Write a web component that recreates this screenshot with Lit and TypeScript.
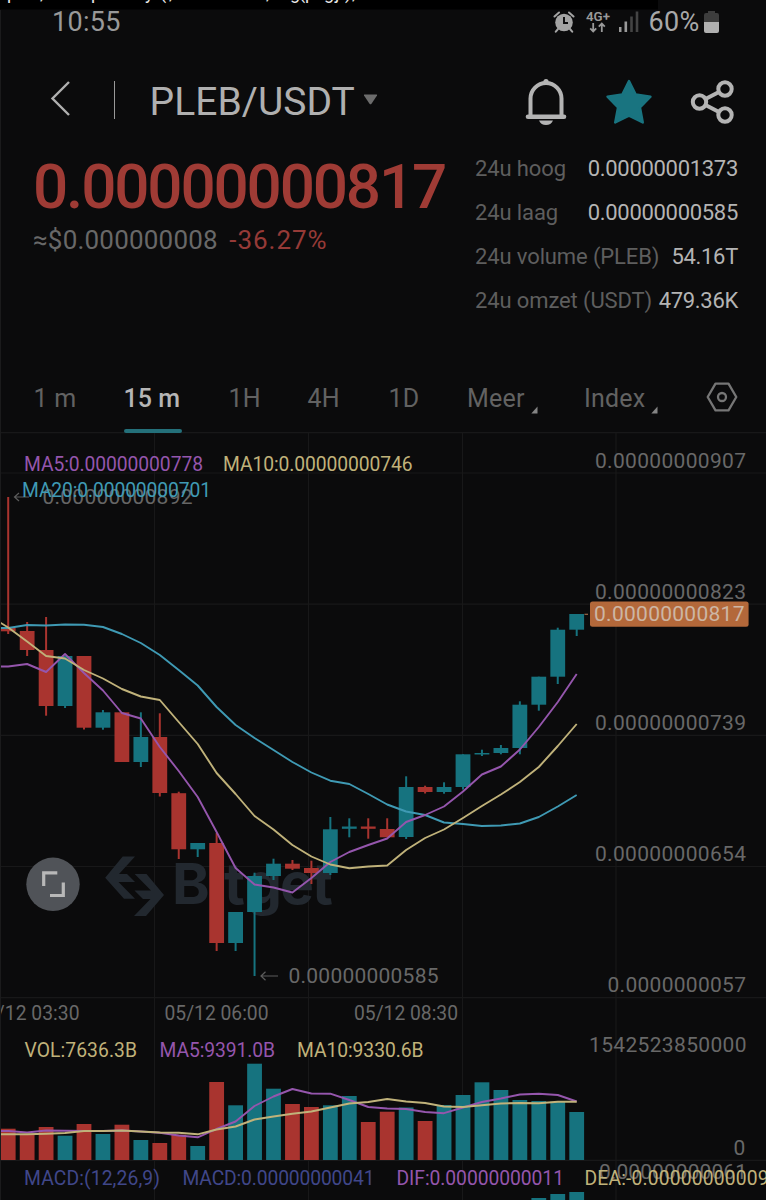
import { LitElement, html, svg, css } from "lit";
import { customElement } from "lit/decorators.js";

type Candle = [up: number, top: number, bottom: number, high: number, low: number];

const STEP = 18.95;
const FIRST_X = 8.2;
const BAR_W = 14.8;
const TEAL = "#16737f";
const RED = "#a9342f";
const PURPLE = "#9556ad";
const SAND = "#c0b27a";
const CYAN = "#3f9ab4";

const xAt = (i: number) => FIRST_X + STEP * i;

const candles: Candle[] = [
  [0, 628, 631.3, 497, 634],
  [0, 631, 650, 622, 656],
  [0, 650, 706, 617, 715.7],
  [1, 656, 706, 656, 708],
  [0, 656, 727.7, 656, 729.5],
  [1, 712.3, 727.7, 710, 729.7],
  [0, 712.3, 762, 712.3, 762],
  [1, 737, 762, 712.3, 767],
  [0, 737, 793, 713.3, 796.5],
  [0, 793.2, 849.3, 791.7, 859],
  [1, 843, 849.3, 843, 857],
  [0, 843, 943, 833, 951],
  [1, 912, 943, 912, 951],
  [1, 876, 912, 872.7, 976],
  [1, 863.7, 876, 858.7, 880],
  [0, 863.7, 868.7, 860, 870],
  [0, 868, 873, 860.7, 884],
  [1, 829.3, 873, 817, 875],
  [1, 826.5, 828.8, 818.3, 837.3],
  [0, 826.5, 828.8, 818.3, 838.7],
  [0, 829, 837.3, 818.3, 837.3],
  [1, 787, 837, 776.3, 839],
  [0, 787, 792, 785.7, 793.5],
  [1, 787, 792, 782.3, 793.7],
  [1, 754.3, 787, 754.3, 789.5],
  [1, 753, 754.5, 749.7, 756],
  [1, 748, 753, 745, 754.3],
  [1, 704.7, 748, 701.3, 754.3],
  [1, 676.7, 704.7, 676.7, 710.7],
  [1, 629.7, 676.7, 627.7, 684],
  [1, 614, 629.7, 614, 636],
];

const ma5 = [666.5, 664, 672, 654, 673, 690.5, 713, 718.5, 747, 771, 797, 832, 868, 884.5, 887.5, 892.5, 878, 862, 852, 845, 838.5, 822, 815, 806.5, 791.5, 774.5, 766.5, 749.5, 727, 702, 674];
const ma10 = [627.5, 641.5, 656, 658.5, 670, 678.5, 689, 696.5, 700, 722, 744, 773, 794, 816, 829.5, 845, 856.5, 864.5, 868.3, 866.5, 865.5, 850, 838, 829.5, 818, 806, 794.5, 782, 767, 746, 724];
const ma20 = [628, 625, 625.5, 624.5, 624.7, 627, 634, 643, 655, 670, 685.5, 707, 725, 738, 750, 762, 772.5, 780.7, 784, 794, 804.5, 811.5, 815, 822.5, 824, 826, 825.5, 823.5, 817, 806.5, 795];

const volume = [1128.7, 1134, 1127, 1135.7, 1124, 1134, 1124.7, 1140, 1143, 1134.7, 1146, 1082, 1105.3, 1063.7, 1088.7, 1104, 1107, 1105.3, 1096, 1122, 1111.7, 1107.5, 1121, 1105, 1095, 1082.3, 1090, 1100, 1101, 1101.7, 1112];
const volMa5 = [1131, 1132.5, 1130.5, 1130.7, 1131, 1131, 1130.5, 1131.5, 1132.7, 1135.5, 1137.3, 1129, 1121.5, 1106, 1096.5, 1089, 1093.5, 1093.7, 1100, 1107, 1108.5, 1109, 1112, 1113.2, 1107.5, 1102, 1098.5, 1094.5, 1093.8, 1095, 1101.5];
const volMa10 = [1134.3, 1134.3, 1133.8, 1133, 1131, 1131, 1130.5, 1131.5, 1132.5, 1132.7, 1134.3, 1129.5, 1126.5, 1119.5, 1116.5, 1113.7, 1111.5, 1107.5, 1103.5, 1102, 1099, 1101.5, 1103, 1106.5, 1107, 1105.3, 1103.5, 1103, 1103.3, 1101.7, 1101.7];

const line = (startY: number, ys: number[]) =>
  [`0,${startY}`, ...ys.map((y, i) => `${xAt(i).toFixed(1)},${y}`)].join(" ");

// A chart label: left ink edge, baseline, run width, font size.
const label = (text: string, x: number, y: number, width: number, size: number, fill: string) =>
  svg`<text x=${x} y=${y} textLength=${width} font-size=${size} fill=${fill}>${text}</text>`;

@customElement("price-chart")
export class PriceChart extends LitElement {
  static styles = css`
    :host { display: block; }
    .chart { display: block; width: 766px; height: 768px; font-family: Roboto, sans-serif; }
    .grid { stroke: #181819; stroke-width: 1.2; }
    .curve { fill: none; stroke-width: 1.9; stroke-linejoin: round; }
    .brand { font-family: Inter, sans-serif; font-weight: 700; }
  `;

  render() {
    const axis = "#686868";
    return html`
      <svg class="chart" viewBox="0 432 766 768">
        <g class="grid">
          ${[154.5, 308.5, 462.5, 616].map((x) => svg`<line x1=${x} x2=${x} y1="432" y2="1200" />`)}
          ${[432.6, 473, 604.2, 735.4, 866.5, 997.6, 1160.4].map((y) => svg`<line x1="0" x2="766" y1=${y} y2=${y} />`)}
        </g>

        <g fill="#22282f">
          <path d="M122.7 856.5H135L119 874H127L135 882H118.5L135 898.7H124L105.2 877.8Z" />
          <path d="M134.7 874H146.5L164 895L146 916H134L150.5 899H143L134.5 890.5H151Z" />
          <text class="brand" x="172 210 224 246 280 312" y="903.5" font-size="57">Bitget</text>
        </g>

        ${candles.map(([up, top, bottom, high, low], i) => {
          const x = xAt(i);
          const c = up ? TEAL : RED;
          return svg`
            <rect x=${x - 1} y=${high} width="2" height=${low - high} fill=${c} />
            <rect x=${x - BAR_W / 2} y=${top} width=${BAR_W} height=${bottom - top} fill=${c} />`;
        })}
        ${volume.map((y, i) => svg`
          <rect x=${xAt(i) - BAR_W / 2} y=${y} width=${BAR_W} height=${1160 - y} fill=${candles[i][0] ? TEAL : RED} />`)}
        ${[1198, 1194, 1192].map((y, i) => svg`
          <rect x=${xAt(28 + i) - BAR_W / 2} y=${y} width=${BAR_W} height="10" fill=${TEAL} />`)}

        <polyline class="curve" stroke=${CYAN} points=${line(628, ma20)} />
        <polyline class="curve" stroke=${PURPLE} points=${line(666.5, ma5)} />
        <polyline class="curve" stroke=${SAND} points=${line(622.5, ma10)} />
        <polyline class="curve" stroke=${PURPLE} points=${line(1131, volMa5)} />
        <polyline class="curve" stroke=${SAND} points=${line(1134.3, volMa10)} />

        <g fill="none" stroke="#5c5c5c" stroke-width="1.2">
          <path d="M19 493L14.5 497L19 501M14.5 497H29" />
          <path d="M265.5 971.8L261 976L265.5 980.2M261 976H278" />
          <path d="M584.5 614.3H588" stroke="#9a6a4a" />
        </g>

        ${label("0.00000000892", 42.5, 504.3, 150, 21, "#666")}
        ${label("0.00000000585", 288.5, 982.7, 150, 21, axis)}

        ${label("MA5:0.00000000778", 24, 471, 179, 19.3, PURPLE)}
        ${label("MA10:0.00000000746", 223, 471, 189.5, 19.3, SAND)}
        ${label("MA20:0.00000000701", 22, 496.7, 189, 19.3, CYAN)}

        ${label("0.00000000907", 595, 468, 151, 21, axis)}
        ${label("0.00000000823", 595, 599, 151, 21, axis)}
        ${label("0.00000000739", 595, 730, 151, 21, axis)}
        ${label("0.00000000654", 595, 861, 151, 21, axis)}
        ${label("0.0000000057", 607.5, 992, 138.5, 21, axis)}
        ${label("1542523850000", 589, 1052, 157.5, 21, axis)}
        ${label("0", 733.5, 1155, 12, 21, axis)}
        ${label("0.00000000061", 599, 1179, 148, 21, axis)}

        <rect x="590" y="601.5" width="158.6" height="25.2" rx="2.5" fill="#b3683a" />
        ${label("0.00000000817", 594, 621.3, 150.5, 21, "#cdb6a4")}

        ${label("05/12 03:30", -25, 1020, 104.5, 19.3, axis)}
        ${label("05/12 06:00", 164.5, 1020, 104, 19.3, axis)}
        ${label("05/12 08:30", 354, 1020, 104, 19.3, axis)}

        ${label("VOL:7636.3B", 24.5, 1056.8, 112.5, 19.3, SAND)}
        ${label("MA5:9391.0B", 159.5, 1056.8, 115.5, 19.3, PURPLE)}
        ${label("MA10:9330.6B", 297, 1056.8, 126.5, 19.3, SAND)}

        ${label("MACD:(12,26,9)", 24, 1185, 136, 19.3, "#40478a")}
        ${label("MACD:0.00000000041", 182.5, 1185, 192, 19.3, "#40478a")}
        ${label("DIF:0.00000000011", 396.5, 1185, 167.5, 19.3, PURPLE)}
        ${label("DEA:-0.00000000009", 584.5, 1185, 184, 19.3, SAND)}

        <circle cx="53" cy="884.3" r="26.7" fill="#505358" />
        <path d="M43.7 886V872.8H57.3M50 895.5H63.3V882.5" fill="none" stroke="#b8b8b8" stroke-width="3.2" />
      </svg>`;
  }
}

@customElement("app-root")
export class AppRoot extends LitElement {
  static styles = css`
    :host { display: block; width: 766px; height: 1200px; overflow: hidden; background: #0b0b0c; color: #b2b2b2; font-family: Roboto, "Liberation Sans", sans-serif; }
    .screen { position: relative; display: flex; flex-direction: column; }
    svg { display: block; flex: none; }
    .caption { position: absolute; top: 0; left: 0; }
    .status { display: flex; align-items: center; height: 43px; padding: 0 46px 0 52px; box-sizing: border-box; font-size: 27px; line-height: 32px; color: #999; }
    .clock { letter-spacing: 0.3px; flex: 1; }
    .battery-text { margin: 0 3.5px 0 9px; letter-spacing: 0.3px; color: #a8a8a8; }
    .header { display: flex; align-items: center; height: 103px; padding: 14px 31px 0 50px; box-sizing: border-box; }
    .back { margin-top: -6px; }
    .divider { width: 1.5px; height: 38px; margin: -3px 34.5px 0 42.5px; background: #999; }
    .pair { font-size: 39px; line-height: 46px; letter-spacing: 0.05px; color: #b0b0b0; }
    .caret { margin: -5px 0 0 8px; }
    .actions { display: flex; align-items: center; margin-left: auto; gap: 38px; margin-top: 1px; }
    .summary { display: flex; justify-content: space-between; height: 219px; padding: 0 28px 0 33px; box-sizing: border-box; }
    .quote { padding-top: 14px; }
    .price { font-size: 62px; line-height: 54px; letter-spacing: -2.15px; font-weight: 500; color: #9f3b35; }
    .sub { display: flex; gap: 11.5px; margin-top: 10px; font-size: 26px; line-height: 32px; letter-spacing: 0.2px; color: #686868; }
    .change { letter-spacing: 0.95px; color: #963a37; }
    .stats { width: 263px; padding-top: 1px; }
    .stat { display: flex; justify-content: space-between; font-size: 22px; line-height: 44px; letter-spacing: -0.12px; white-space: nowrap; color: #5e5e5e; }
    .value { letter-spacing: -0.3px; color: #b4b4b4; }
    .tabs { display: grid; grid-template-columns: 90px 105px 79px 81px 78.5px 117px 122px 32px; align-items: center; height: 67px; padding-left: 33.5px; font-size: 25px; color: #626262; }
    .tab { position: relative; display: flex; align-items: center; height: 67px; letter-spacing: 0.2px; white-space: nowrap; }
    .active { width: 58px; color: #b5b5b5; font-weight: 500; letter-spacing: 0; }
    .active::after { content: ""; position: absolute; z-index: 1; left: 0; right: 0; bottom: -1px; height: 4px; border-radius: 2px; background: #24707a; }
    .corner { margin: 23px 0 0 6px; }
    .settings { margin-top: -3px; }
    .edge { position: absolute; left: 0; top: 10px; width: 1px; height: 1190px; background: #1b1b1c; }
  `;

  render() {
    const stats = [
      ["24u hoog", "0.00000001373"],
      ["24u laag", "0.00000000585"],
      ["24u volume (PLEB)", "54.16T"],
      ["24u omzet (USDT)", "479.36K"],
    ];
    const corner = html`<svg class="corner" width="7" height="8" viewBox="0 0 7 8"><path d="M6.5 .5V7.5H.3Z" fill="#858585" /></svg>`;
    return html`
      <div class="screen">
        <svg class="caption" width="766" height="10" viewBox="0 0 766 10">
          <rect width="658" height="9.5" fill="#000" />
          <text y="-1" font-size="18" fill="#e8e8e8" x="7 40 91 145 160 169 266 290 299 305 324 335 345 352">p,py(,,g(pgj),</text>
        </svg>

        <div class="status">
          <span class="clock">10:55</span>
          <svg width="22" height="22" viewBox="0 0 22 22">
            <circle cx="11" cy="11.5" r="8.8" fill="#a4a4a4" />
            <path d="M11 6V12H15" fill="none" stroke="#0b0b0c" stroke-width="1.9" />
            <path d="M1.5 5.5L6 1.5M20.5 5.5L16 1.5M5 18L2.8 20.7M17 18L19.2 20.7" stroke="#a4a4a4" stroke-width="2" stroke-linecap="round" />
          </svg>
          <svg width="40" height="24" viewBox="0 0 40 24">
            <text x="11" y="10.6" font-size="13" font-weight="600" fill="#9a9a9a" textLength="24" lengthAdjust="spacingAndGlyphs">4G+</text>
            <path d="M18.2 13V21M15.2 18.3L18.2 21.5L21.2 18.3M26.8 22V14M23.8 16.7L26.8 13.5L29.8 16.7" fill="none" stroke="#9a9a9a" stroke-width="1.8" />
          </svg>
          <svg width="24" height="24" viewBox="0 0 24 24">
            <rect x="4" y="17" width="2.5" height="5" fill="#999" />
            <rect x="9.5" y="11.5" width="2.6" height="10.5" fill="#999" />
            <rect x="15.2" y="6.5" width="2.6" height="15.5" fill="#444" />
            <rect x="20.7" y="1.5" width="2.6" height="20.5" fill="#444" />
          </svg>
          <span class="battery-text">60%</span>
          <svg width="17" height="24" viewBox="0 0 17 24">
            <path d="M5 1H12V3H14Q16 3 16 5V12H1V5Q1 3 3 3H5Z" fill="#3d3d3d" />
            <path d="M1 12H16V21Q16 23 14 23H3Q1 23 1 21Z" fill="#b0b0b0" />
          </svg>
        </div>

        <div class="header">
          <svg class="back" width="21" height="38" viewBox="0 0 21 38"><path d="M19 2L2.5 18.5L19 35" fill="none" stroke="#b0b0b0" stroke-width="2.4" /></svg>
          <div class="divider"></div>
          <div class="pair">PLEB/USDT</div>
          <svg class="caret" width="15" height="11" viewBox="0 0 15 11"><path d="M1.5 .5H13.5Q14.5 .5 14 1.5L8.5 9.7Q7.5 11 6.5 9.7L1 1.5Q.5 .5 1.5 .5Z" fill="#6c6c6c" /></svg>
          <div class="actions">
            <svg width="42" height="48" viewBox="0 0 42 48">
              <path d="M5.5 38.5V20.5A15.5 15.5 0 0 1 36.5 20.5V38.5" fill="none" stroke="#b4b4b4" stroke-width="4" />
              <path d="M3 38.8H39" stroke="#b4b4b4" stroke-width="4.6" stroke-linecap="round" />
              <circle cx="21" cy="3.5" r="2.6" fill="#b4b4b4" />
              <path d="M14 42.5H28Q26 47 21 47T14 42.5Z" fill="#b4b4b4" />
            </svg>
            <svg width="47" height="46" viewBox="0 0 47 46">
              <path d="M24 2L30.7 15.5L45.5 17.7L35 28.5L37.8 43.5L24 36.6L10.2 43.5L13 28.5L2.5 17.7L17.3 15.5Z" fill="#197480" stroke="#197480" stroke-width="2.4" stroke-linejoin="round" />
            </svg>
            <svg width="45" height="46" viewBox="0 0 45 46" fill="none" stroke="#b4b4b4" stroke-width="4">
              <circle cx="9.5" cy="23" r="6.7" />
              <circle cx="35" cy="10" r="6.7" />
              <circle cx="35" cy="36" r="6.7" />
              <path d="M15.5 20L29 13M15.5 26L29 33" />
            </svg>
          </div>
        </div>

        <div class="summary">
          <div class="quote">
            <div class="price">0.00000000817</div>
            <div class="sub"><span>≈$0.000000008</span><span class="change">-36.27%</span></div>
          </div>
          <div class="stats">
            ${stats.map(([name, value]) => html`<div class="stat"><span>${name}</span><span class="value">${value}</span></div>`)}
          </div>
        </div>

        <div class="tabs">
          <div class="tab">1 m</div>
          <div class="tab active">15 m</div>
          <div class="tab">1H</div>
          <div class="tab">4H</div>
          <div class="tab">1D</div>
          <div class="tab">Meer${corner}</div>
          <div class="tab">Index${corner}</div>
          <svg class="settings" width="32" height="30" viewBox="0 0 32 30" fill="none" stroke="#767676" stroke-width="2.3">
            <path d="M9.5 1.7H22.5L30.3 15L22.5 28.3H9.5L1.7 15Z" stroke-linejoin="round" />
            <circle cx="16" cy="15" r="4" />
          </svg>
        </div>

        <price-chart></price-chart>
        <div class="edge"></div>
      </div>`;
  }
}
